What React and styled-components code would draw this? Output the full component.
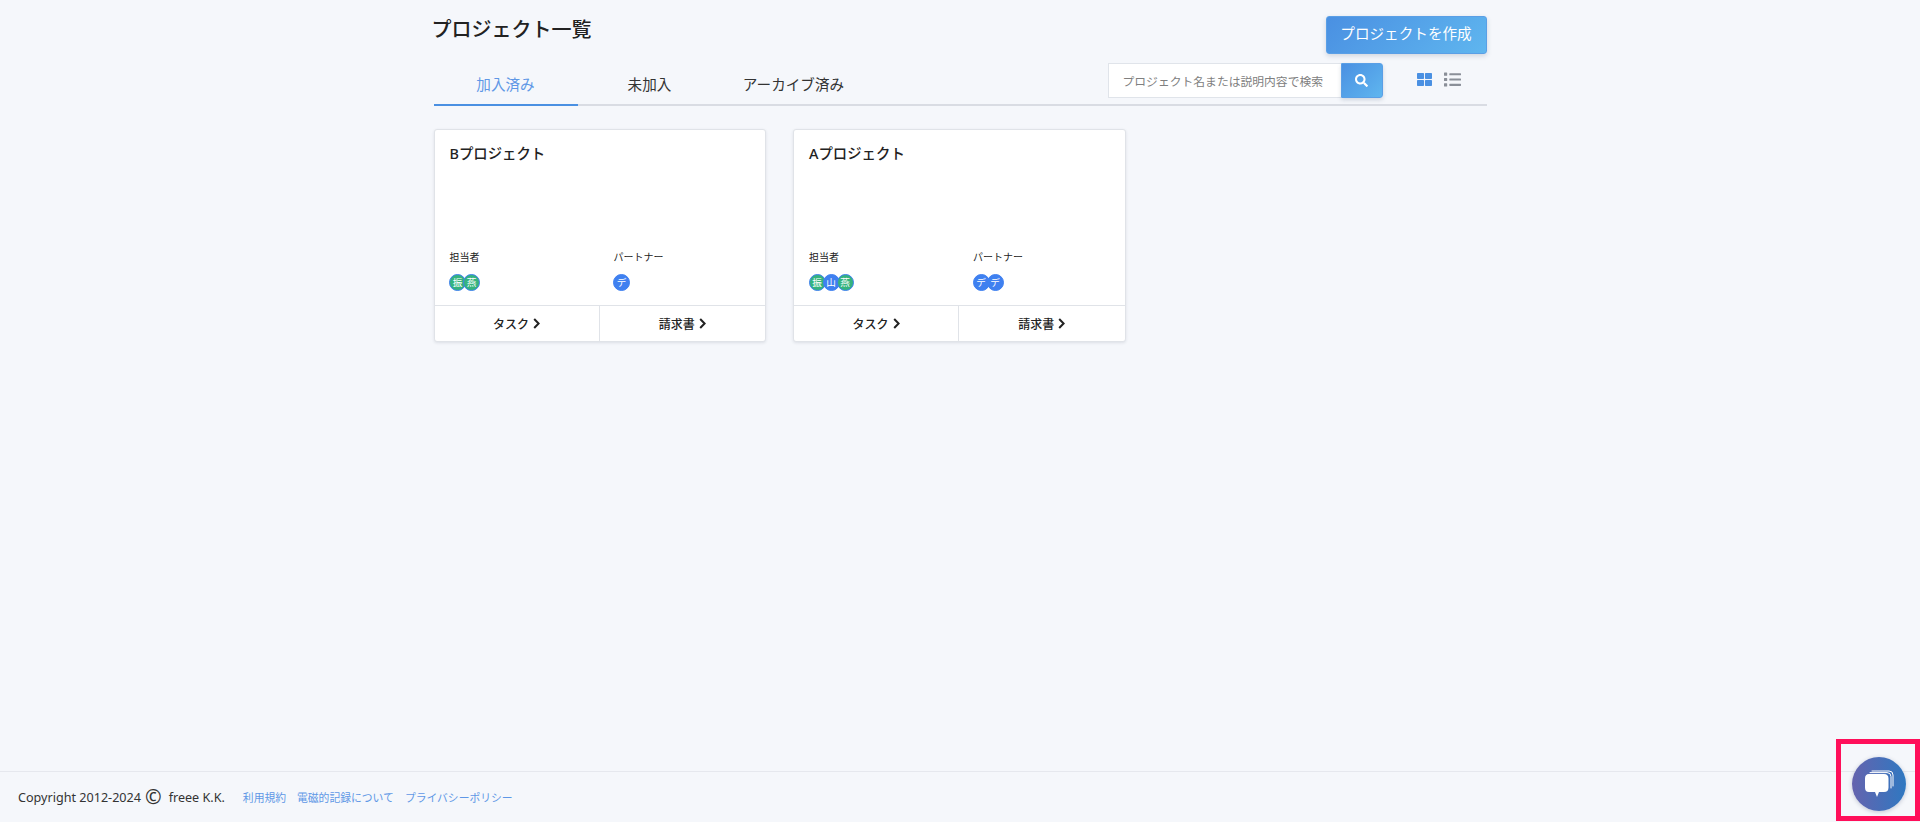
import React from 'react';
import styled, {createGlobalStyle} from 'styled-components';
import {FaSearch, FaThLarge, FaList} from 'react-icons/fa';

const GlobalStyle = createGlobalStyle`
  html, body {
    background: #f5f7fb;
    color: #222;
    font-family: "Noto Sans", "Noto Sans CJK JP", sans-serif;
    height: 100%;
    margin: 0;
    overflow: hidden;
  }
  #root {
    height: 100%;
  }
`;

const Page = styled.div`
  display: flex;
  flex-direction: column;
  height: 822px;
`;

const Main = styled.main`
  flex: 1;
  margin: 0 auto;
  width: 1053px;
`;

const HeaderRow = styled.div`
  align-items: flex-start;
  box-sizing: border-box;
  display: flex;
  height: 63px;
  justify-content: space-between;
  padding-top: 16px;
`;

const Title = styled.h1`
  color: #222;
  font-size: 20px;
  font-weight: 500;
  line-height: 28px;
  margin: 0 0 0 -2px;
`;

const CreateButton = styled.button`
  background: linear-gradient(135deg, #4a90e2, #5fb6ef);
  border: 1px solid #5a9fe6;
  border-radius: 3px;
  box-shadow: 0 2px 5px rgba(60, 80, 110, .2);
  color: #fff;
  font-family: inherit;
  font-size: 14.6px;
  height: 38px;
  padding: 0 0 5px;
  width: 161px;
`;

const TabBar = styled.div`
  align-items: flex-start;
  border-bottom: 2px solid #d9dce3;
  box-sizing: border-box;
  display: flex;
  height: 43px;
  justify-content: space-between;
`;

const Tabs = styled.div`
  display: flex;
`;

const Tab = styled.div`
  border-bottom: 2px solid ${props => props.active ? '#4a90e2' : 'transparent'};
  box-sizing: border-box;
  color: ${props => props.active ? '#5f97e6' : '#333'};
  font-size: 14.6px;
  height: 43px;
  line-height: 43px;
  text-align: center;
  width: 144px;
`;

const Tools = styled.div`
  align-items: flex-start;
  display: flex;
`;

const SearchBox = styled.div`
  display: flex;
  height: 35px;
`;

const SearchInput = styled.input`
  background: #fff;
  border: 1px solid #e0e4ea;
  border-right: 0;
  box-sizing: border-box;
  font-family: inherit;
  font-size: 11.8px;
  height: 35px;
  outline: 0;
  padding: 0 0 0 14px;
  width: 233px;
  &::placeholder {
    color: #808080;
    opacity: 1;
  }
`;

const SearchButton = styled.button`
  align-items: center;
  background: linear-gradient(135deg, #4a90e2, #5fb6ef);
  border: 1px solid #5a9fe6;
  border-radius: 0 3px 3px 0;
  box-shadow: 0 2px 4px rgba(60, 80, 110, .2);
  color: #fff;
  display: flex;
  height: 35px;
  justify-content: center;
  padding: 0;
  width: 42px;
`;

const ViewIcons = styled.div`
  align-items: center;
  box-sizing: border-box;
  display: flex;
  gap: 12px;
  height: 35px;
  margin-left: 34px;
  margin-right: 26px;
  padding-bottom: 3px;
`;

const ViewIcon = styled.span`
  color: ${props => props.active ? '#4a90e2' : '#8a8f98'};
  display: flex;
`;

const CardGrid = styled.div`
  display: flex;
  gap: 27px;
  margin-top: 23px;
`;

const Card = styled.section`
  background: #fff;
  border: 1px solid #e0e3e8;
  border-radius: 3px;
  box-shadow: 0 1px 3px rgba(50, 60, 80, .12);
  box-sizing: border-box;
  display: flex;
  flex-direction: column;
  height: 213px;
  width: 332.5px;
`;

const CardBody = styled.div`
  flex: 1;
  padding: 12px 15px 0;
`;

const CardTitle = styled.h2`
  font-size: 14.4px;
  font-weight: 500;
  line-height: 24px;
  margin: 0;
`;

const Members = styled.div`
  display: grid;
  grid-template-columns: 164px 1fr;
  margin-top: 83px;
`;

const Label = styled.div`
  color: #222;
  font-size: 10px;
  line-height: 16px;
`;

const AvatarRow = styled.div`
  display: flex;
  margin: 9px 0 0 -.5px;
`;

const Avatar = styled.span`
  align-items: center;
  background: ${props => props.green ? '#35b37e' : '#3f80f0'};
  border: 1px solid #3f80f0;
  border-radius: 50%;
  box-sizing: border-box;
  color: #fff;
  display: flex;
  font-size: 9.6px;
  height: 17px;
  justify-content: center;
  line-height: 1;
  margin-right: -3px;
  position: relative;
  width: 17px;
`;

const CardFooter = styled.div`
  border-top: 1px solid #e0e3e8;
  display: grid;
  grid-template-columns: 164px 1fr;
  height: 35px;
`;

const FooterLink = styled.a`
  align-items: center;
  border-left: ${props => props.divider ? '1px solid #e0e3e8' : '0'};
  color: #222;
  display: flex;
  font-size: 12px;
  font-weight: 500;
  gap: 4px;
  justify-content: center;
`;

const Footer = styled.footer`
  align-items: center;
  border-top: 1px solid #e6e8ee;
  color: #333;
  display: flex;
  font-size: 12.6px;
  height: 50px;
  padding-left: 18px;
`;

const CopySign = styled.span`
  font-size: 20px;
  line-height: 1;
  margin: 0 7px 0 4px;
`;

const FooterLinks = styled.div`
  display: flex;
  font-size: 10.8px;
  gap: 11px;
  margin-left: 18px;
`;

const TextLink = styled.a`
  color: #5f97e6;
`;

const Highlight = styled.div`
  border: 5px solid #ff0f5a;
  bottom: 1px;
  box-sizing: border-box;
  height: 82px;
  pointer-events: none;
  position: fixed;
  right: 0;
  width: 84px;
`;

const ChatButton = styled.div`
  align-items: center;
  background: linear-gradient(90deg, #6563ae, #2f78c1);
  border-radius: 50%;
  bottom: 11px;
  box-shadow: 0 1px 4px rgba(40, 50, 90, .25);
  display: flex;
  height: 54px;
  justify-content: center;
  position: fixed;
  right: 14px;
  width: 54px;
`;

const Chevron = () => (
  <svg width="7" height="11" viewBox="0 0 7 11">
    <path d="M1.2 1 L5.6 5.5 L1.2 10" fill="none" stroke="#222" strokeWidth="2" />
  </svg>
);

const ChatIcon = () => (
  <svg width="30" height="30" viewBox="0 0 30 30">
    <path d="M8 2 H25 Q29 2 29 6 V17" fill="none" stroke="#fff" strokeWidth="1" strokeLinecap="round" />
    <path d="M6 3.6 H23 Q27 3.6 27 7.6 V19" fill="none" stroke="#fff" strokeWidth="1" strokeLinecap="round" />
    <path d="M5 5 H20 Q24.5 5 24.5 9.5 V18.5 Q24.5 23 20 23 H15 L13 28 L11 23 H5 Q1 23 1 18.5 V9.5 Q1 5 5 5 Z" fill="#fff" />
  </svg>
);

const projects = [
  {name: 'Bプロジェクト', members: [['振', true], ['燕', true]], partners: ['デ']},
  {name: 'Aプロジェクト', members: [['振', true], ['山', false], ['燕', true]], partners: ['デ', 'デ']}
];

const App = () => (
  <Page>
    <GlobalStyle />
    <Main>
      <HeaderRow>
        <Title>プロジェクト一覧</Title>
        <CreateButton>プロジェクトを作成</CreateButton>
      </HeaderRow>
      <TabBar>
        <Tabs>
          <Tab active>加入済み</Tab>
          <Tab>未加入</Tab>
          <Tab>アーカイブ済み</Tab>
        </Tabs>
        <Tools>
          <SearchBox>
            <SearchInput placeholder="プロジェクト名または説明内容で検索" />
            <SearchButton><FaSearch size={13} /></SearchButton>
          </SearchBox>
          <ViewIcons>
            <ViewIcon active><FaThLarge size={15} /></ViewIcon>
            <ViewIcon><FaList size={17} /></ViewIcon>
          </ViewIcons>
        </Tools>
      </TabBar>
      <CardGrid>
        {projects.map(project => (
          <Card key={project.name}>
            <CardBody>
              <CardTitle>{project.name}</CardTitle>
              <Members>
                <div>
                  <Label>担当者</Label>
                  <AvatarRow>
                    {project.members.map(([initial, green], i) => (
                      <Avatar key={i} green={green}>{initial}</Avatar>
                    ))}
                  </AvatarRow>
                </div>
                <div>
                  <Label>パートナー</Label>
                  <AvatarRow>
                    {project.partners.map((initial, i) => (
                      <Avatar key={i}>{initial}</Avatar>
                    ))}
                  </AvatarRow>
                </div>
              </Members>
            </CardBody>
            <CardFooter>
              <FooterLink>タスク<Chevron /></FooterLink>
              <FooterLink divider>請求書<Chevron /></FooterLink>
            </CardFooter>
          </Card>
        ))}
      </CardGrid>
    </Main>
    <Footer>
      Copyright 2012-2024<CopySign>©</CopySign>freee K.K.
      <FooterLinks>
        <TextLink>利用規約</TextLink>
        <TextLink>電磁的記録について</TextLink>
        <TextLink>プライバシーポリシー</TextLink>
      </FooterLinks>
    </Footer>
    <ChatButton><ChatIcon /></ChatButton>
    <Highlight />
  </Page>
);

export default App;
